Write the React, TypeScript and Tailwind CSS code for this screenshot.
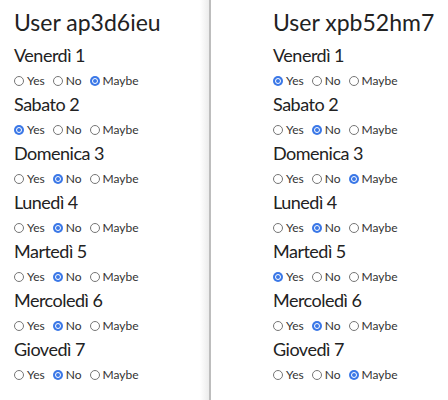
const days = ["Venerdì 1", "Sabato 2", "Domenica 3", "Lunedì 4", "Martedì 5", "Mercoledì 6", "Giovedì 7"];

const users = [
  { name: "ap3d6ieu", answers: ["Maybe", "Yes", "No", "No", "No", "No", "No"] },
  { name: "xpb52hm7", answers: ["Yes", "No", "Maybe", "No", "Yes", "No", "Maybe"] },
];

function Radio({ label, checked }: { label: string; checked: boolean }) {
  return (
    <span className="flex items-center gap-[3px]">
      {checked ? (
        <span className="flex h-[10px] w-[10px] items-center justify-center rounded-full bg-[#3b78e7]">
          <span className="h-[6px] w-[6px] rounded-full border border-white bg-[#3b78e7]" />
        </span>
      ) : (
        <span className="h-[10px] w-[10px] rounded-full border border-[#767676] bg-white" />
      )}
      <span>{label}</span>
    </span>
  );
}

function UserColumn({ name, answers }: { name: string; answers: string[] }) {
  return (
    <div>
      <h1 className="h-[38px] whitespace-nowrap pt-[6px] text-[23px] leading-[32px]">User {name}</h1>
      {days.map((d, i) => (
        <div key={d}>
          <h2 className="mt-[4px] h-[26px] whitespace-nowrap text-[18px] leading-[26px] tracking-[-0.5px]">{d}</h2>
          <div className="flex h-[19px] items-end gap-[8px] whitespace-nowrap text-[12px] leading-[13px] text-[#333]">
            {["Yes", "No", "Maybe"].map((o) => (
              <Radio key={o} label={o} checked={answers[i] === o} />
            ))}
          </div>
        </div>
      ))}
    </div>
  );
}

export default function App() {
  return (
    <div className="flex h-[400px] w-[448px] overflow-hidden bg-white text-[#222]" style={{ fontFamily: 'Lato, sans-serif' }}>
      <div className="w-[200px] shrink-0 pl-[14px]">
        <UserColumn {...users[0]} />
      </div>
      <div className="w-[9px] shrink-0 bg-gradient-to-r from-white to-[#ececec]" />
      <div className="w-[2px] shrink-0 bg-[#bdbdbd]" />
      <div className="flex-1 pl-[62px]">
        <UserColumn {...users[1]} />
      </div>
    </div>
  );
}
